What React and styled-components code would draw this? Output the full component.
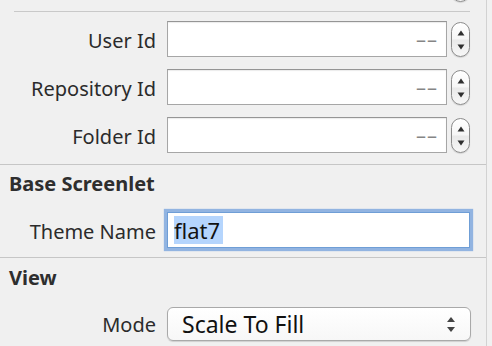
import React from 'react'
import styled, { createGlobalStyle } from 'styled-components'

const GlobalStyle = createGlobalStyle`
	html, body {
		margin: 0;
		padding: 0;
		background: #f0f0f0;
	}
	body {
		font-family: 'Noto Sans', 'DejaVu Sans', sans-serif;
		color: #2b2b2b;
	}
`

const Page = styled.div`
	display: flex;
	width: 492px;
	height: 346px;
	overflow: hidden;
	background: #f1f1f1;
`

const Panel = styled.div`
	width: 486px;
	height: 346px;
	flex: none;
	background: #f0f0f0;
	border-right: 1px solid #d2d2d2;
`

const Section = styled.section`
	display: flex;
	flex-direction: column;
	gap: ${(p) => p.gap ?? 12}px;
	padding: ${(p) => p.pad || '0'};
	border-bottom: ${(p) => (p.last ? 'none' : '1px solid #c6c6c6')};
`

const StubRow = styled.div`
	display: flex;
	justify-content: flex-end;
	padding-right: 16px;
	margin-top: -33px;
`

const InnerRule = styled.div`
	height: 1px;
	margin: 9px 16px 0 14px;
	background: #c9c9c9;
`

const Header = styled.h3`
	margin: 0;
	padding-left: 9px;
	font-size: 20px;
	font-weight: 700;
	line-height: 24px;
	color: #2e2e2e;
`

const Row = styled.div`
	display: grid;
	grid-template-columns: 156px ${(p) => p.fieldWidth || 303}px;
	column-gap: 11px;
	align-items: center;
`

const Label = styled.label`
	text-align: right;
	font-size: 20px;
	line-height: 24px;
	padding-top: ${(p) => p.drop ?? 3}px;
	color: #2b2b2b;
	white-space: nowrap;
`

const FieldGroup = styled.div`
	display: flex;
	align-items: center;
	gap: 4px;
`

const NumberField = styled.div`
	box-sizing: border-box;
	width: 280px;
	height: 36px;
	display: flex;
	align-items: center;
	justify-content: flex-end;
	padding-right: 8px;
	background: #fff;
	border: 1px solid #a6a6a6;
	border-top-color: #959595;
	box-shadow: inset 0 1px 1px rgba(0, 0, 0, 0.08);
	font-size: 20px;
	color: #858585;
	letter-spacing: 1px;
`

const StepperBox = styled.div`
	box-sizing: border-box;
	width: 19px;
	height: 35px;
	flex: none;
	border: 1px solid #8c8c8c;
	border-radius: 10px;
	background: linear-gradient(#ffffff, #f6f6f6 48%, #e9e9e9 52%, #f7f7f7);
	box-shadow: 0 1px 1px rgba(0, 0, 0, 0.12);
	display: flex;
	flex-direction: column;
	align-items: center;
	justify-content: space-between;
	padding: 7px 0 6px;
`

const TextField = styled.div`
	box-sizing: border-box;
	width: 303px;
	height: 36px;
	display: flex;
	align-items: center;
	padding-left: 6px;
	background: #fff;
	border: 1px solid #6f9ed6;
	box-shadow: 0 0 1px 3px rgba(115, 160, 220, 0.75);
	font-size: 22px;
	color: #111;
`

const Selection = styled.span`
	background: #b5d5fd;
	line-height: 28px;
	padding-right: 3px;
`

const PopUp = styled.div`
	box-sizing: border-box;
	width: 304px;
	height: 34px;
	display: flex;
	align-items: center;
	justify-content: space-between;
	padding: 0 14px 0 14px;
	background: linear-gradient(#ffffff, #f7f7f7);
	border: 1px solid #a9a9a9;
	border-radius: 6px;
	box-shadow: 0 1px 1px rgba(0, 0, 0, 0.14);
	font-size: 23px;
	color: #111;
`

const Arrows = ({ size = 6, color = '#333', gap = 9 }) => (
	<svg width={size + 2} height={gap + 10} viewBox={`0 0 ${size + 2} ${gap + 10}`}>
		<polygon points={`1,5 ${size + 1},5 ${size / 2 + 1},0`} fill={color} />
		<polygon points={`1,${gap + 5} ${size + 1},${gap + 5} ${size / 2 + 1},${gap + 10}`} fill={color} />
	</svg>
)

const Tri = ({ down }) => (
	<svg width='8' height='6' viewBox='0 0 8 6'>
		<polygon points={down ? '0.5,0.5 7.5,0.5 4,5.5' : '0.5,5.5 7.5,5.5 4,0.5'} fill='#2f2f2f' />
	</svg>
)

const Stepper = () => (
	<StepperBox>
		<Tri />
		<Tri down />
	</StepperBox>
)

const NumberRow = ({ label }) => (
	<Row fieldWidth={303}>
		<Label>{label}</Label>
		<FieldGroup>
			<NumberField>––</NumberField>
			<Stepper />
		</FieldGroup>
	</Row>
)

export default function App() {
	return (
		<Page>
			<GlobalStyle />
			<Panel>
				<Section gap={0} pad='0 0 11px 0'>
					<StubRow>
						<Stepper />
					</StubRow>
					<InnerRule />
					<Section gap={12} pad='9px 0 0 0' last>
						<NumberRow label='User Id' />
						<NumberRow label='Repository Id' />
						<NumberRow label='Folder Id' />
					</Section>
				</Section>

				<Section gap={16} pad='7px 0 9px 0'>
					<Header>Base Screenlet</Header>
					<Row>
						<Label drop={4}>Theme Name</Label>
						<TextField>
							<Selection>flat7</Selection>
						</TextField>
					</Row>
				</Section>

				<Section gap={17} pad='8px 0 0 0' last>
					<Header>View</Header>
					<Row fieldWidth={304}>
						<Label drop={2}>Mode</Label>
						<PopUp>
							<span>Scale To Fill</span>
							<Arrows size={8} color='#444' gap={5} />
						</PopUp>
					</Row>
				</Section>
			</Panel>
		</Page>
	)
}
